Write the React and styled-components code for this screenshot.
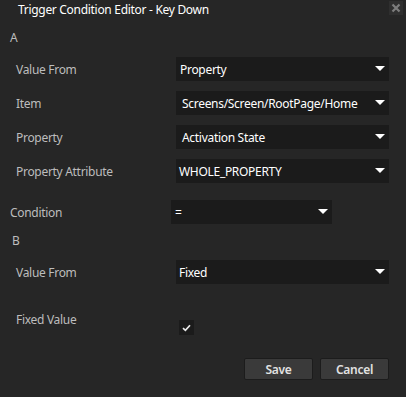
import React from "react";
import styled, { createGlobalStyle } from "styled-components";

const Global = createGlobalStyle`
  html, body { margin: 0; padding: 0; background: #262626; }
  body { font-family: "Noto Sans", "Open Sans", sans-serif; }
`;

const Dialog = styled.div`
  width: 406px;
  height: 397px;
  background: #262626;
  color: #bdbdbd;
  font-size: 12px;
  letter-spacing: -0.3px;
  display: flex;
  flex-direction: column;
  box-sizing: border-box;
`;

const TitleBar = styled.div`
  height: 20px;
  display: flex;
  align-items: flex-start;
  justify-content: space-between;
  padding: 1px 3px 0 18px;
  box-sizing: border-box;
`;

const Title = styled.div`
  color: #ffffff;
  font-size: 12px;
  line-height: 18px;
`;

const CloseButton = styled.div`
  width: 14px;
  height: 14px;
  background: #2f2f2f;
  display: flex;
  align-items: center;
  justify-content: center;
`;

const SectionLabel = styled.div`
  height: 20px;
  line-height: 20px;
  padding-left: ${(p) => p.$indent}px;
  margin-top: ${(p) => p.$top}px;
  font-size: 12px;
`;

const Row = styled.div`
  display: grid;
  grid-template-columns: ${(p) => p.$labelWidth}px ${(p) => p.$fieldWidth}px;
  align-items: ${(p) => (p.$alignTop ? "start" : "center")};
  margin-top: ${(p) => p.$top}px;
  min-height: 24px;
`;

const Label = styled.div`
  padding-left: ${(p) => p.$indent}px;
  padding-top: 1px;
  font-size: 12px;
  line-height: 18px;
`;

const Select = styled.div`
  height: 24px;
  background: #1b1b1b;
  color: #ffffff;
  display: flex;
  align-items: center;
  justify-content: space-between;
  padding: 0 4px 0 ${(p) => p.$pad}px;
  box-sizing: border-box;
  font-size: 12px;
`;

const Arrow = styled.span`
  flex: none;
  width: 0;
  height: 0;
  border-left: 5px solid transparent;
  border-right: 5px solid transparent;
  border-top: 5px solid #ffffff;
  margin-top: -1px;
`;

const Checkbox = styled.div`
  width: 15px;
  height: 15px;
  margin-top: 10px;
  margin-left: 3px;
  background: #1b1b1b;
  display: flex;
  align-items: center;
  justify-content: center;
`;

const Footer = styled.div`
  display: flex;
  justify-content: flex-end;
  gap: 7px;
  padding-right: 17px;
  margin-top: 23px;
`;

const Button = styled.div`
  width: 69px;
  height: 22px;
  box-sizing: border-box;
  background: #3a3a3a;
  border: 1px solid #1c1c1c;
  border-radius: 2px;
  color: #e2e2e2;
  font-size: 12px;
  font-weight: 600;
  display: flex;
  align-items: center;
  justify-content: center;
`;

function Dropdown({ value, pad = 4 }) {
  return (
    <Select $pad={pad}>
      <span>{value}</span>
      <Arrow />
    </Select>
  );
}

export default function App() {
  return (
    <>
      <Global />
      <Dialog>
        <TitleBar>
          <Title>Trigger Condition Editor - Key Down</Title>
          <CloseButton>
            <svg width="10" height="10" viewBox="0 0 10 10">
              <path d="M1.5 1.5 L8.5 8.5 M8.5 1.5 L1.5 8.5" stroke="#7d7d7d" strokeWidth="2.2" />
            </svg>
          </CloseButton>
        </TitleBar>

        <SectionLabel $indent={10} $top={8}>A</SectionLabel>
        <Row $labelWidth={176} $fieldWidth={213} $top={9}>
          <Label $indent={16}>Value From</Label>
          <Dropdown value="Property" />
        </Row>
        <Row $labelWidth={176} $fieldWidth={213} $top={10}>
          <Label $indent={16}>Item</Label>
          <Dropdown value="Screens/Screen/RootPage/Home" pad={6} />
        </Row>
        <Row $labelWidth={176} $fieldWidth={213} $top={10}>
          <Label $indent={16}>Property</Label>
          <Dropdown value="Activation State" pad={6} />
        </Row>
        <Row $labelWidth={176} $fieldWidth={213} $top={10}>
          <Label $indent={16}>Property Attribute</Label>
          <Dropdown value="WHOLE_PROPERTY" pad={3} />
        </Row>
        <Row $labelWidth={171} $fieldWidth={161} $top={17}>
          <Label $indent={10}>Condition</Label>
          <Dropdown value="=" />
        </Row>

        <SectionLabel $indent={12} $top={7}>B</SectionLabel>
        <Row $labelWidth={176} $fieldWidth={213} $top={9}>
          <Label $indent={16}>Value From</Label>
          <Dropdown value="Fixed" pad={3} />
        </Row>
        <Row $labelWidth={176} $fieldWidth={213} $top={26} $alignTop>
          <Label $indent={16}>Fixed Value</Label>
          <Checkbox>
            <svg width="9" height="8" viewBox="0 0 9 8">
              <path d="M1 4.2 L3.4 6.4 L8 1.2" stroke="#e8e8e8" strokeWidth="1.7" fill="none" />
            </svg>
          </Checkbox>
        </Row>

        <Footer>
          <Button>Save</Button>
          <Button>Cancel</Button>
        </Footer>
      </Dialog>
    </>
  );
}
